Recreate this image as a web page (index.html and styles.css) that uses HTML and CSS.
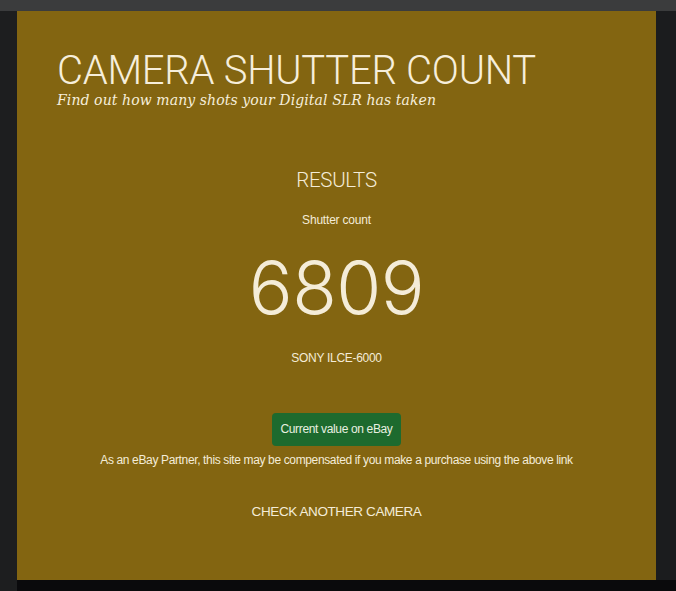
FILE: index.html
```html
<!DOCTYPE html>
<html>
<head>
<meta charset="utf-8">
<link rel="stylesheet" href="styles.css">
</head>
<body>
<div class="topbar"></div>
<div class="stage">
  <main class="panel">
    <header class="head">
      <h1 class="title">CAMERA SHUTTER COUNT</h1>
      <p class="tagline">Find out how many shots your Digital SLR has taken</p>
    </header>
    <section class="results">
      <h2 class="results-title">RESULTS</h2>
      <p class="label">Shutter count</p>
      <p class="count">6809</p>
      <p class="model">SONY ILCE-6000</p>
      <a class="ebay-btn" href="#">Current value on eBay</a>
      <p class="disclaimer">As an eBay Partner, this site may be compensated if you make a purchase using the above link</p>
      <a class="again" href="#">CHECK ANOTHER CAMERA</a>
    </section>
  </main>
  <div class="rightside"></div>
</div>
<div class="bottom"></div>
</body>
</html>
```
FILE: styles.css
```css
html, body { margin: 0; padding: 0; }
body {
  background: #1d1e1f;
  width: 676px;
  height: 591px;
  overflow: hidden;
  font-family: "Liberation Sans", Arial, sans-serif;
  color: #f4ecd8;
}
.topbar { height: 11px; background: #3b3c3d; }
.stage { display: flex; padding-left: 17px; }
.panel {
  width: 639px;
  height: 569px;
  background: #836511;
  box-sizing: border-box;
  padding: 40px 40px 0 40px;
}
.rightside { flex: 1; background: #1b1c1e; }
.bottom { height: 11px; background: #0a0a0c; margin-left: 17px; }
.head { margin: 0; }
.title {
  margin: 0;
  font-family: Roboto, "Liberation Sans", sans-serif;
  font-weight: 300;
  font-size: 40px;
  line-height: 40px;
  letter-spacing: -0.25px;
  color: #f6eedb;
}
.tagline {
  margin: 0;
  font-family: "DejaVu Serif", Georgia, serif;
  font-style: italic;
  font-size: 14px;
  line-height: 18px;
  letter-spacing: 0.1px;
  color: #f6eedb;
}
.results {
  display: flex;
  flex-direction: column;
  align-items: center;
  text-align: center;
  margin-top: 59px;
}
.results-title {
  margin: 0;
  font-family: Roboto, "Liberation Sans", sans-serif;
  font-weight: 300;
  font-size: 20.5px;
  line-height: 24px;
  letter-spacing: -0.3px;
}
.label {
  margin: 21px 0 0;
  font-size: 12px;
  line-height: 14px;
  letter-spacing: -0.2px;
}
.count {
  margin: 18px 0 0;
  font-family: Inter, Roboto, sans-serif;
  font-weight: 300;
  font-size: 73px;
  line-height: 86px;
  letter-spacing: -0.5px;
}
.model {
  margin: 20px 0 0;
  font-size: 12px;
  line-height: 14px;
  letter-spacing: -0.3px;
}
.ebay-btn {
  margin-top: 48px;
  display: block;
  background: #1d6a2e;
  color: #e8f0e0;
  text-decoration: none;
  border-radius: 4px;
  padding: 9px 8px 10px;
  font-size: 12px;
  line-height: 14px;
  letter-spacing: -0.35px;
}
.disclaimer {
  margin: 7px 0 0;
  font-size: 12px;
  line-height: 14px;
  letter-spacing: -0.36px;
}
.again {
  margin-top: 37px;
  color: #f4ecd8;
  text-decoration: none;
  font-size: 13.5px;
  line-height: 16px;
  letter-spacing: -0.4px;
}
```
